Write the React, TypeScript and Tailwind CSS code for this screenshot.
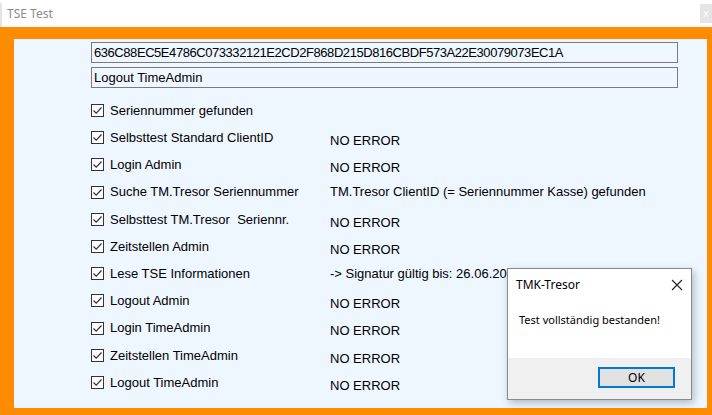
import React from "react";

const rows: { label: string; result?: string; shift?: boolean }[] = [
  { label: "Seriennummer gefunden" },
  { label: "Selbsttest Standard ClientID", result: "NO ERROR", shift: true },
  { label: "Login Admin", result: "NO ERROR", shift: true },
  { label: "Suche TM.Tresor Seriennummer", result: "TM.Tresor ClientID (= Seriennummer Kasse) gefunden" },
  { label: "Selbsttest TM.Tresor  Seriennr.", result: "NO ERROR", shift: true },
  { label: "Zeitstellen Admin", result: "NO ERROR", shift: true },
  { label: "Lese TSE Informationen", result: "-> Signatur gültig bis: 26.06.2025" },
  { label: "Logout Admin", result: "NO ERROR", shift: true },
  { label: "Login TimeAdmin", result: "NO ERROR", shift: true },
  { label: "Zeitstellen TimeAdmin", result: "NO ERROR", shift: true },
  { label: "Logout TimeAdmin", result: "NO ERROR", shift: true },
];

function Check() {
  return (
    <div className="w-[13px] h-[13px] border border-[#333333] bg-white flex items-center justify-center shrink-0">
      <svg width="11" height="11" viewBox="0 0 11 11">
        <path d="M1.5 5.5 L4.2 8.2 L9.5 2.5" fill="none" stroke="#333333" strokeWidth="1.2" />
      </svg>
    </div>
  );
}

export default function App() {
  const sans = { fontFamily: '"Liberation Sans", Arial, sans-serif' };
  return (
    <div className="w-[712px] h-[415px] flex flex-col overflow-hidden bg-white" style={sans}>
      <div className="h-[27px] bg-white flex items-center justify-between relative shrink-0">
        <div className="absolute left-0 top-[3px] w-[2px] h-[24px] bg-[#e3e3e3]" />
        <span
          className="pl-[7px] text-[12px] text-[#8a8a8a]"
          style={{ fontFamily: '"Noto Sans", "Open Sans", sans-serif' }}
        >
          TSE Test
        </span>
        <div className="w-[12px] h-[19px] bg-[#e5e5e5] text-white text-[11px] flex items-center justify-center self-start mt-[4px]">
          x
        </div>
      </div>
      <div className="flex-1 bg-[#ff8c00] pt-[12px] pl-[14px] pr-[5px] pb-[7px] flex">
        <div className="flex-1 bg-[#eef6ff] relative pl-[77px] pt-[3px]">
          <div className="w-[587px] h-[21px] border border-[#7a7a7a] bg-[#eef6ff] flex items-center pl-[2px] text-[13px] text-black tracking-[-0.44px]">
            636C88EC5E4786C073332121E2CD2F868D215D816CBDF573A22E30079073EC1A
          </div>
          <div className="w-[587px] h-[21px] mt-[4px] border border-[#7a7a7a] bg-[#eef6ff] flex items-center pl-[2px] text-[13px] text-black">
            Logout TimeAdmin
          </div>
          <div className="mt-[9px] grid grid-rows-[repeat(11,27.2px)] text-[13px] text-black">
            {rows.map((r, i) => (
              <div key={i} className="flex items-center">
                <div className="w-[239px] flex items-center gap-[6px] shrink-0">
                  <Check />
                  <span className="whitespace-pre">{r.label}</span>
                </div>
                {r.result && (
                  <span className={`whitespace-pre ${r.shift ? "mt-[6px]" : ""}`}>{r.result}</span>
                )}
              </div>
            ))}
          </div>

          <div
            className="absolute left-[493px] top-[229px] w-[185px] h-[132px] bg-white border border-[#8a8a8a] shadow-[2px_3px_8px_rgba(0,0,0,0.25)] flex flex-col"
            style={{ fontFamily: '"Noto Sans", "Open Sans", sans-serif' }}
          >
            <div className="h-[31px] flex items-center justify-between pl-[8px] pr-[8px] text-[12px] text-black">
              <span>TMK-Tresor</span>
              <svg width="12" height="12" viewBox="0 0 12 12">
                <path d="M1 1 L11 11 M11 1 L1 11" stroke="#222" strokeWidth="1.1" />
              </svg>
            </div>
            <div className="h-[58px] pl-[11px] pt-[12px] text-[11px] text-black">Test vollständig bestanden!</div>
            <div className="flex-1 bg-[#f0f0f0] flex items-start justify-end pr-[16px] pt-[9px]">
              <div className="w-[77px] h-[21px] border-2 border-[#0078d7] bg-[#e1e1e1] flex items-center justify-center text-[12px] text-black">
                OK
              </div>
            </div>
          </div>
        </div>
      </div>
    </div>
  );
}
